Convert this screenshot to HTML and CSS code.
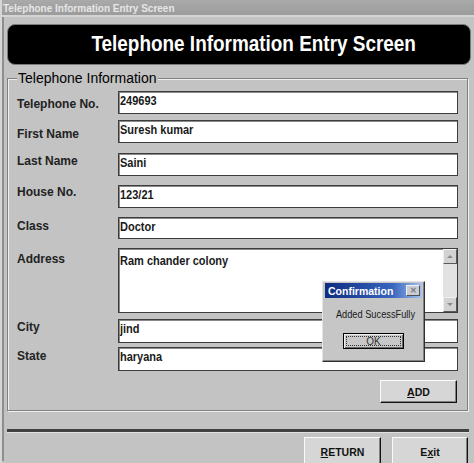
FILE: index.html
```html
<!DOCTYPE html>
<html lang="en">
<head>
  <meta charset="UTF-8">
  <title>Telephone Information Entry Screen</title>
  <link rel="stylesheet" href="styles.css">
</head>
<body>

  <div class="window">
    <div class="titlebar">Telephone Information Entry Screen</div>

    <div class="client">
      <div class="banner"><span>Telephone Information Entry Screen</span></div>

      <fieldset class="group">
        <legend>Telephone Information</legend>

        <div class="row tel"><label>Telephone No.</label><div class="field"><span>249693</span></div></div>
        <div class="row first"><label>First Name</label><div class="field"><span>Suresh kumar</span></div></div>
        <div class="row last"><label>Last Name</label><div class="field"><span>Saini</span></div></div>
        <div class="row house"><label>House No.</label><div class="field"><span>123/21</span></div></div>
        <div class="row cls"><label>Class</label><div class="field"><span>Doctor</span></div></div>
        <div class="row addr">
          <label>Address</label>
          <div class="field memo">
            <span class="memo-text">Ram chander colony</span>
            <div class="vscroll">
              <div class="arrow up"></div>
              <div class="track"></div>
              <div class="arrow down"></div>
            </div>
          </div>
        </div>
        <div class="row city"><label>City</label><div class="field"><span>jind</span></div></div>
        <div class="row state"><label>State</label><div class="field"><span>haryana</span></div></div>

        <div class="group-actions">
          <button class="btn add"><u>A</u>DD</button>
        </div>
      </fieldset>

      <div class="rule"></div>

      <div class="actions">
        <button class="btn"><u>R</u>ETURN</button>
        <button class="btn">E<u>x</u>it</button>
      </div>
    </div>

    <!-- message box shown after a record is saved -->
    <div class="msgbox">
      <div class="msgbox-title">
        <span>Confirmation</span>
        <span class="msgbox-close">&#x2715;</span>
      </div>
      <div class="msgbox-text">Added SucessFully</div>
      <div class="msgbox-buttons">
        <button class="ok"><span>OK</span></button>
      </div>
    </div>
  </div>

</body>
</html>
```

FILE: styles.css
```css
:root {
  --face: #c3c3c3;
  --btn: #d6d6d6;
  --dark: #404040;
  --shadow: #808080;
  --light: #f4f4f4;
}
* {
  margin: 0;
  padding: 0;
  box-sizing: border-box;
}
body {
  font-family: 'Liberation Sans', Arial, sans-serif;
  background-color: var(--face);
  width: 474px;
  height: 463px;
  overflow: hidden;
}

.window {
  position: relative;
  width: 474px;
  height: 463px;
  background-color: var(--face);
  border-left: 2px solid #d6d6d6;
  overflow: hidden;
}

.titlebar {
  height: 17px;
  line-height: 17px;
  padding-left: 1px;
  background: linear-gradient(#a9a9a9, #9c9c9c);
  color: #e6e6e6;
  font-size: 10px;
  font-weight: bold;
  border-bottom: 2px solid #d4d4d4;
}

.client {
  padding: 7px 0 0 3px;
  border-left: 2px solid #8e8e8e;
  height: 444px;
}

/* black heading strip */
.banner {
  width: 464px;
  height: 41px;
  background-color: #000;
  border: 1px solid #7a7a7a;
  border-radius: 8px;
  color: #fff;
  text-align: center;
  padding-left: 30px;
  line-height: 38px;
}
.banner span {
  display: inline-block;
  font-size: 22px;
  font-weight: bold;
  transform: scaleX(0.86);
}

/* group box */
.group {
  width: 461px;
  margin: 5px 0 0 0;
  padding: 4px 0 7px 9px;
  border: 1px solid var(--shadow);
  box-shadow: inset 1px 1px 0 #efefef, 1px 1px 0 #efefef;
}
.group legend {
  margin-left: 0;
  padding: 0 1px;
  font-size: 14px;
  color: #000;
  line-height: 17px;
  background-color: var(--face);
}

.row {
  display: grid;
  grid-template-columns: 101px 340px;
  align-items: start;
}
.row label {
  font-size: 12px;
  font-weight: bold;
  line-height: 14px;
  color: #222;
}

.field {
  height: 23px;
  background-color: #fff;
  border: 1px solid #3c3c3c;
  box-shadow: inset 1px 1px 0 #8a8a8a;
  padding: 2px 0 0 1px;
  font-size: 12.5px;
  font-weight: bold;
  line-height: 14px;
  color: #1a1a1a;
  white-space: nowrap;
}
.field span {
  display: inline-block;
  transform: scaleX(0.88);
  transform-origin: left;
}

/* row gaps and label offsets as laid out on the form */
.row.tel label { padding-top: 6px; }
.row.first { margin-top: 6px; }
.row.first label { padding-top: 7px; }
.row.last { margin-top: 10px; }
.row.last label { padding-top: 1px; }
.row.house { margin-top: 9px; }
.row.house label { padding-top: 0; }
.row.cls { margin-top: 9px; }
.row.cls .field { height: 22px; }
.row.cls label { padding-top: 2px; }
.row.addr { margin-top: 9px; }
.row.addr label { padding-top: 4px; }
.row.city { margin-top: 6px; }
.row.city .field { height: 24px; }
.row.city label { padding-top: 1px; }
.row.state { margin-top: 4px; }
.row.state .field { height: 24px; }
.row.state label { padding-top: 2px; }

.memo {
  height: 65px;
  display: flex;
  justify-content: space-between;
  padding: 0 0 0 1px;
}
.field .memo-text {
  padding-top: 5px;
}

.vscroll {
  width: 14px;
  display: flex;
  flex-direction: column;
  background-color: #e2e2e2;
}
.vscroll .track {
  flex: 1;
}
.arrow {
  height: 15px;
  background-color: #d2d2d2;
  border: 1px solid;
  border-color: #f0f0f0 #5a5a5a #5a5a5a #f0f0f0;
  display: flex;
  align-items: center;
  justify-content: center;
}
.arrow::after {
  content: '';
  border-left: 3px solid transparent;
  border-right: 3px solid transparent;
}
.arrow.up::after {
  border-bottom: 3px solid #8a8a8a;
}
.arrow.down::after {
  border-top: 3px solid #8a8a8a;
}

.group-actions {
  display: flex;
  justify-content: flex-end;
  margin-top: 9px;
  padding-right: 10px;
}

.btn {
  width: 77px;
  height: 23px;
  background-color: var(--btn);
  border: 1px solid;
  border-color: #fafafa #111 #111 #fafafa;
  box-shadow: inset -1px -1px 0 var(--shadow);
  font-family: 'Liberation Sans', Arial, sans-serif;
  font-size: 10.5px;
  font-weight: bold;
  color: #111;
}

.rule {
  width: 462px;
  height: 3px;
  margin: 18px 0 0 0;
  background-color: #404040;
  box-shadow: 0 1px 0 #e0e0e0;
}

.actions {
  display: flex;
  justify-content: flex-end;
  gap: 11px;
  margin-top: 5px;
  width: 461px;
}
.actions .btn {
  height: 30px;
}
.actions .btn:last-child {
  width: 76px;
}

/* confirmation dialog */
.msgbox {
  position: absolute;
  left: 320px;
  top: 281px;
  width: 103px;
  height: 81px;
  background-color: #c6c6c6;
  border: 1px solid;
  border-color: #e4e4e4 #303030 #303030 #e4e4e4;
  box-shadow: inset -1px -1px 0 var(--shadow);
  padding: 1px 2px;
}
.msgbox-title {
  height: 15px;
  display: flex;
  align-items: center;
  justify-content: space-between;
  padding: 0 2px 0 3px;
  background: linear-gradient(90deg, #0c2c80, #3a66c0 70%, #a8c4ec);
  color: #fff;
  font-size: 10.5px;
  font-weight: bold;
}
.msgbox-close {
  width: 14px;
  height: 11px;
  background-color: #c8ccd4;
  border: 1px solid;
  border-color: #f0f0f0 #505050 #505050 #f0f0f0;
  color: #7a7a7a;
  font-size: 8px;
  line-height: 9px;
  text-align: center;
}
.msgbox-text {
  margin-top: 10px;
  padding-left: 13px;
  font-size: 11px;
  color: #1a1a1a;
  transform: scaleX(0.84);
  transform-origin: left;
  white-space: nowrap;
}
.msgbox-buttons {
  display: flex;
  justify-content: center;
  margin-top: 13px;
}
.ok {
  width: 61px;
  height: 16px;
  background-color: #c8c8c8;
  border: 1px solid #000;
  box-shadow: inset 1px 1px 0 #f0f0f0, inset -1px -1px 0 #6a6a6a;
  padding: 2px;
  font-family: 'Liberation Sans', Arial, sans-serif;
  font-size: 10px;
  color: #333;
}
.ok span {
  display: block;
  height: 10px;
  line-height: 10px;
  border: 1px dotted #333;
}
```
